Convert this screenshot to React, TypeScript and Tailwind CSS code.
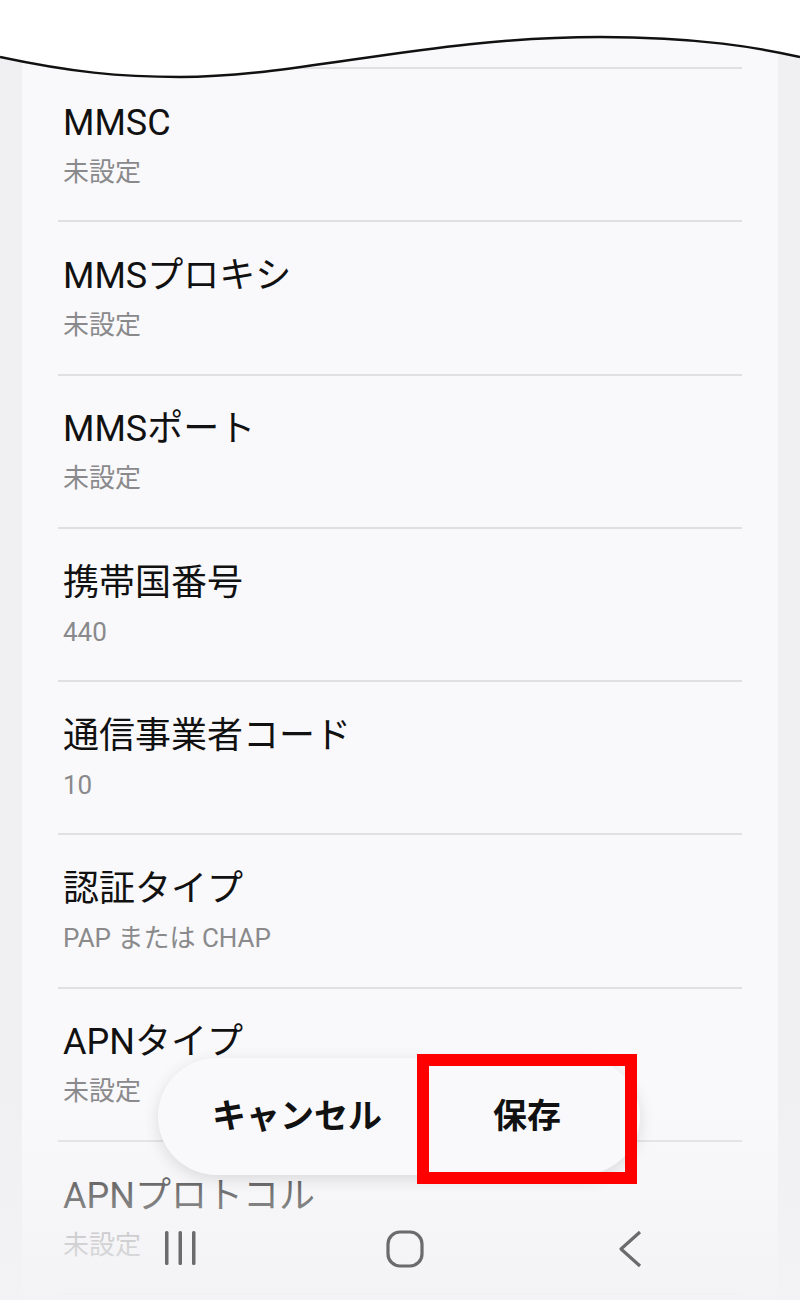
import React from 'react';

interface ApnField {
  label: string;
  value: string;
}

const fields: ApnField[] = [
  { label: 'MMSC', value: '未設定' },
  { label: 'MMSプロキシ', value: '未設定' },
  { label: 'MMSポート', value: '未設定' },
  { label: '携帯国番号', value: '440' },
  { label: '通信事業者コード', value: '10' },
  { label: '認証タイプ', value: 'PAP または CHAP' },
  { label: 'APNタイプ', value: '未設定' },
  { label: 'APNプロトコル', value: '未設定' },
];

const font = { fontFamily: "Roboto, 'Noto Sans CJK JP', sans-serif" };

const FieldRow: React.FC<{ field: ApnField }> = ({ field }) => (
  <div className="h-[153.3px] border-b-2 border-[#e0e0e3] flex flex-col justify-center gap-[12px] pl-[5px]">
    <div className="text-[36px] leading-[43px] text-[#111111]">{field.label}</div>
    <div className="text-[26px] leading-[31px] text-[#8a8a8c]">{field.value}</div>
  </div>
);

// wavy cut at the top of the screenshot
const WaveHeader = () => (
  <svg className="absolute left-0 top-0" width="800" height="82" viewBox="0 0 800 82">
    <path
      d="M0 57 C70 72 120 77 180 77 C300 77 430 37 600 37 C700 37 760 48 800 57 L800 0 L0 0 Z"
      fill="#ffffff"
    />
    <path
      d="M0 57 C70 72 120 77 180 77 C300 77 430 37 600 37 C700 37 760 48 800 57"
      fill="none"
      stroke="#111111"
      strokeWidth="2.5"
    />
  </svg>
);

const NavBar = () => (
  <div className="absolute left-0 bottom-0 w-full h-[200px] bg-gradient-to-b from-[#f3f3f5]/0 to-[#f3f3f5]/95 flex items-end">
    <div className="w-full flex justify-center pl-[10px] pb-[32px]">
      <div className="w-[225px] flex justify-center">
        <svg width="36" height="36" viewBox="0 0 36 36">
          <rect x="3" y="1" width="3.5" height="34" rx="1.5" fill="#6b6b6d" />
          <rect x="16.5" y="1" width="3.5" height="34" rx="1.5" fill="#6b6b6d" />
          <rect x="30" y="1" width="3.5" height="34" rx="1.5" fill="#6b6b6d" />
        </svg>
      </div>
      <div className="w-[225px] flex justify-center">
        <svg width="38" height="38" viewBox="0 0 38 38">
          <rect x="2" y="2" width="34" height="34" rx="12" fill="none" stroke="#6b6b6d" strokeWidth="3.2" />
        </svg>
      </div>
      <div className="w-[225px] flex justify-center">
        <svg width="28" height="38" viewBox="0 0 28 38">
          <path d="M24 2 L5 19 L24 36" fill="none" stroke="#6b6b6d" strokeWidth="3.2" strokeLinejoin="round" />
        </svg>
      </div>
    </div>
  </div>
);

export default function App() {
  return (
    <div className="relative w-[800px] h-[1300px] overflow-hidden bg-[#f0f0f2]" style={font}>
      {/* Card with settings list */}
      <div className="mx-[22px] h-full bg-[#f9f9fb] px-[36px]">
        <div className="h-[69px] border-b-2 border-[#e0e0e3]" />
        {fields.map((f) => (
          <FieldRow key={f.label} field={f} />
        ))}
      </div>

      <WaveHeader />
      <NavBar />

      {/* Floating action pill */}
      <div className="absolute left-[158px] top-[1058px] w-[482px] h-[117px] rounded-full bg-[#f9f9fb] shadow-[0_4px_16px_rgba(0,0,0,0.12)] flex items-center">
        <button className="w-[260px] pl-[18px] text-[34px] font-bold text-[#111111]" style={font}>
          キャンセル
        </button>
        <button className="w-[218px] text-[34px] font-bold text-[#111111]" style={font}>
          保存
        </button>
      </div>

      {/* Red highlight box */}
      <div className="absolute left-[417px] top-[1054px] w-[220px] h-[130px] border-[12px] border-[#ff0000]" />
    </div>
  );
}
